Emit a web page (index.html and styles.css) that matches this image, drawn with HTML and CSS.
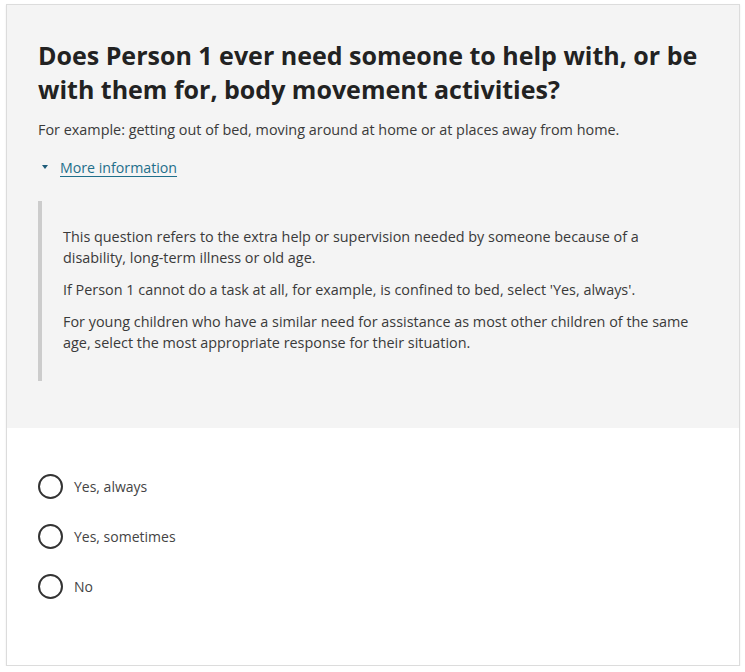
FILE: index.html
```html
<!DOCTYPE html>
<html lang="en">
<head>
<meta charset="utf-8">
<title>Body movement activities</title>
<link rel="stylesheet" href="styles.css">
</head>
<body>
<div class="card">
  <section class="question">
    <h1 class="title">Does Person 1 ever need someone to help with, or be with them for, body movement activities?</h1>
    <p class="hint">For example: getting out of bed, moving around at home or at places away from home.</p>
    <div class="more">
      <span class="caret"></span>
      <a class="more-link" href="#">More information</a>
    </div>
    <div class="info">
      <p>This question refers to the extra help or supervision needed by someone because of a disability, long-term illness or old age.</p>
      <p>If Person 1 cannot do a task at all, for example, is confined to bed, select 'Yes, always'.</p>
      <p>For young children who have a similar need for assistance as most other children of the same age, select the most appropriate response for their situation.</p>
    </div>
  </section>
  <section class="answers">
    <label class="option"><span class="radio"></span><span class="label">Yes, always</span></label>
    <label class="option"><span class="radio"></span><span class="label">Yes, sometimes</span></label>
    <label class="option"><span class="radio"></span><span class="label">No</span></label>
  </section>
</div>
</body>
</html>
```

FILE: styles.css
```css
html, body {
  margin: 0;
  padding: 0;
  background: #ffffff;
}
body {
  font-family: "Open Sans", "Noto Sans", sans-serif;
  color: #333333;
}
.card {
  margin: 4px 5px 0 6px;
  width: 734px;
  height: 662px;
  border: 1px solid #dcdcdc;
  box-shadow: 0 1px 2px rgba(0,0,0,0.08);
  background: #ffffff;
  box-sizing: border-box;
  display: flex;
  flex-direction: column;
}
.question {
  background: #f4f4f4;
  padding: 33px 31px 0 31px;
  height: 423px;
  box-sizing: border-box;
}
.title {
  margin: 0;
  font-size: 25px;
  line-height: 34px;
  font-weight: 700;
  color: #222222;
  width: 670px;
}
.hint {
  margin: 14px 0 0 0;
  font-size: 14.4px;
  line-height: 20px;
  color: #3a3a3a;
}
.more {
  margin-top: 17px;
  display: flex;
  align-items: center;
  gap: 12px;
  padding-left: 4px;
  height: 20px;
}
.caret {
  width: 0;
  height: 0;
  border-left: 3px solid transparent;
  border-right: 3px solid transparent;
  border-top: 4px solid #1d5b79;
}
.more-link {
  font-size: 14.2px;
  color: #1f6f8b;
  text-decoration: underline;
  text-underline-offset: 3px;
}
.info {
  margin-top: 24px;
  border-left: 4px solid #cccccc;
  padding: 25px 0 28px 21px;
  width: 630px;
}
.info p {
  margin: 0 0 11px 0;
  font-size: 14.4px;
  line-height: 21px;
  color: #3a3a3a;
}
.info p:last-child {
  margin-bottom: 0;
}
.answers {
  padding: 46px 31px 0 31px;
  display: flex;
  flex-direction: column;
  gap: 25px;
}
.option {
  display: flex;
  align-items: center;
  gap: 11px;
  height: 25px;
}
.radio {
  width: 25px;
  height: 25px;
  box-sizing: border-box;
  border: 2px solid #333333;
  border-radius: 50%;
  background: #ffffff;
}
.label {
  font-size: 14px;
  color: #444444;
}
```
